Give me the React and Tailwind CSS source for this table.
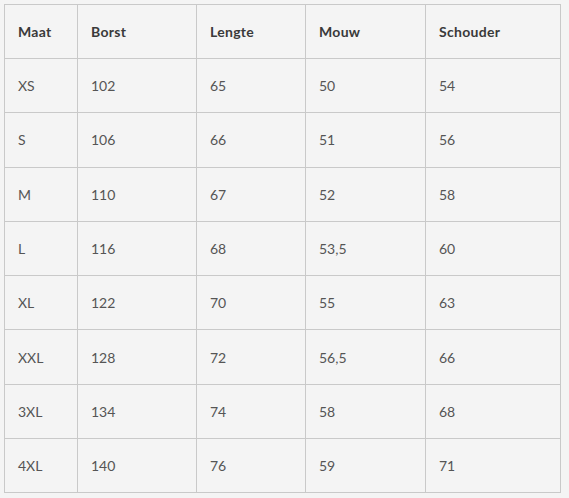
const headers = ["Maat", "Borst", "Lengte", "Mouw", "Schouder"];

const rows = [
  ["XS", "102", "65", "50", "54"],
  ["S", "106", "66", "51", "56"],
  ["M", "110", "67", "52", "58"],
  ["L", "116", "68", "53,5", "60"],
  ["XL", "122", "70", "55", "63"],
  ["XXL", "128", "72", "56,5", "66"],
  ["3XL", "134", "74", "58", "68"],
  ["4XL", "140", "76", "59", "71"],
];

const widths = ["w-[73px]", "w-[119px]", "w-[109px]", "w-[120px]", "w-[135px]"];

export default function App() {
  return (
    <div className="min-h-[498px] w-[569px] bg-[#f4f4f4] pt-[4px] pl-[4px] font-['Lato',sans-serif]">
      <table className="table-fixed border-collapse border border-[#c9c9c9] text-[14px]">
        <thead>
          <tr className="h-[54px]">
            {headers.map((h, i) => (
              <th
                key={h}
                className={`${widths[i]} border border-[#c9c9c9] pl-[13px] text-left font-bold text-[#3a3a3a] tracking-[0.3px]`}
              >
                {h}
              </th>
            ))}
          </tr>
        </thead>
        <tbody>
          {rows.map((r) => (
            <tr key={r[0]} className="h-[54.3px]">
              {r.map((c, i) => (
                <td key={i} className="border border-[#c9c9c9] pl-[13px] text-[#555555]">
                  {c}
                </td>
              ))}
            </tr>
          ))}
        </tbody>
      </table>
    </div>
  );
}
